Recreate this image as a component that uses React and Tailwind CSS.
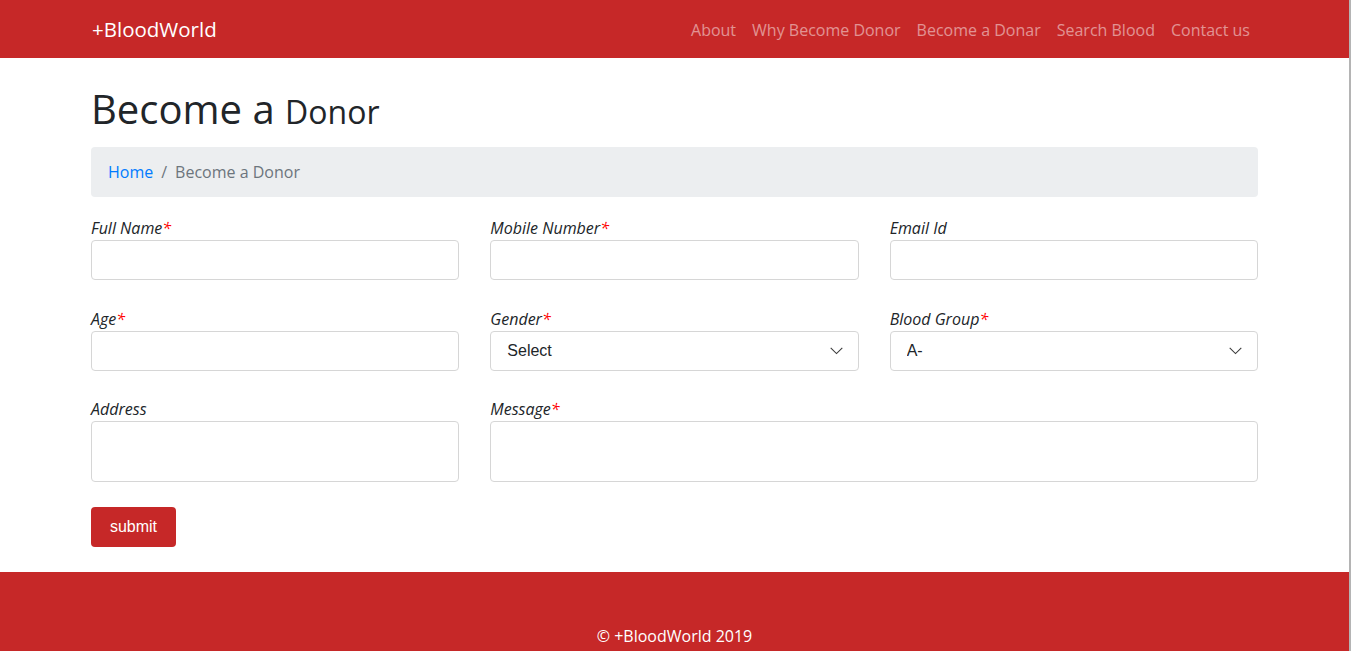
import React from "react";

const F = { fontFamily: '"Open Sans", "Noto Sans", sans-serif' };

function Chevron() {
  return (
    <svg width="13" height="8" viewBox="0 0 13 8" className="absolute right-[16px] top-1/2 -translate-y-1/2 pointer-events-none">
      <path d="M0.7 0.9 L6.5 6.6 L12.3 0.9" fill="none" stroke="#3c3c3c" strokeWidth="1.1" />
    </svg>
  );
}

function Label({ children, req }) {
  return (
    <label className="block italic text-[16px] leading-6 text-[#212529]">
      {children}
      {req && <span className="text-[#ff0000]">*</span>}
    </label>
  );
}

function Input() {
  return <input type="text" className="block w-full h-10 rounded border border-[#d6d6d6] bg-white px-3 outline-none" />;
}

function Select({ value }) {
  return (
    <div className="relative">
      <select
        defaultValue={value}
        className="block w-full h-10 appearance-none rounded border border-[#d6d6d6] bg-white pl-4 pr-8 text-[16px] text-[#212529] outline-none"
        style={{ fontFamily: '"Liberation Sans", Arial, sans-serif' }}
      >
        <option>{value}</option>
      </select>
      <Chevron />
    </div>
  );
}

export default function App() {
  return (
    <div className="flex w-[1351px] bg-white" style={F}>
      <div className="flex-1 min-w-0 flex flex-col">
        <nav className="h-[58px] bg-[#c62828] flex items-center justify-between px-[91px]">
          <span className="text-white text-[20.5px] ml-[1px] leading-7 pb-[1px]">+BloodWorld</span>
          <ul className="flex items-center text-[16px] text-white/50 mr-0 pt-[1px]">
            <li className="px-2">About</li>
            <li className="px-2">Why Become Donor</li>
            <li className="px-2">Become a Donar</li>
            <li className="px-2">Search Blood</li>
            <li className="px-2">Contact us</li>
          </ul>
        </nav>

        <main className="px-[91px]">
          <h1 className="mt-[27px] text-[#212529] leading-[48px] text-[40px] font-normal">
            Become a <span className="text-[32px]">Donor</span>
          </h1>
          <div className="mt-[11px] h-[50px] rounded bg-[#eceef0] flex items-center px-[17px] text-[16px]">
            <span className="text-[#007bff]">Home</span>
            <span className="text-[#6c757d] px-2">/</span>
            <span className="text-[#6c757d]">Become a Donor</span>
          </div>

          <div className="mt-[19px] grid grid-cols-3 gap-x-[31px]">
            <div>
              <Label req>Full Name</Label>
              <Input />
            </div>
            <div>
              <Label req>Mobile Number</Label>
              <Input />
            </div>
            <div>
              <Label>Email Id</Label>
              <Input />
            </div>
          </div>

          <div className="mt-[27px] grid grid-cols-3 gap-x-[31px]">
            <div>
              <Label req>Age</Label>
              <Input />
            </div>
            <div>
              <Label req>Gender</Label>
              <Select value="Select" />
            </div>
            <div>
              <Label req>Blood Group</Label>
              <Select value="A-" />
            </div>
          </div>

          <div className="mt-[26px] grid grid-cols-3 gap-x-[31px]">
            <div>
              <Label>Address</Label>
              <textarea rows={2} className="block w-full h-[61px] resize-none rounded border border-[#d6d6d6] bg-white outline-none" />
            </div>
            <div className="col-span-2">
              <Label req>Message</Label>
              <textarea rows={2} className="block w-full h-[61px] resize-none rounded border border-[#d6d6d6] bg-white outline-none" />
            </div>
          </div>

          <button
            className="mt-[25px] mb-[25px] h-10 w-[85px] rounded bg-[#c62828] text-white text-[16px]"
            style={{ fontFamily: '"Liberation Sans", Arial, sans-serif' }}
          >
            submit
          </button>
        </main>

        <footer className="bg-[#c62828] h-[80px] flex items-end justify-center pb-[4px]">
          <span className="text-white text-[16px] leading-6">© +BloodWorld 2019</span>
        </footer>
      </div>
      <div className="w-[2px] bg-[#b4b4b4]" />
    </div>
  );
}
